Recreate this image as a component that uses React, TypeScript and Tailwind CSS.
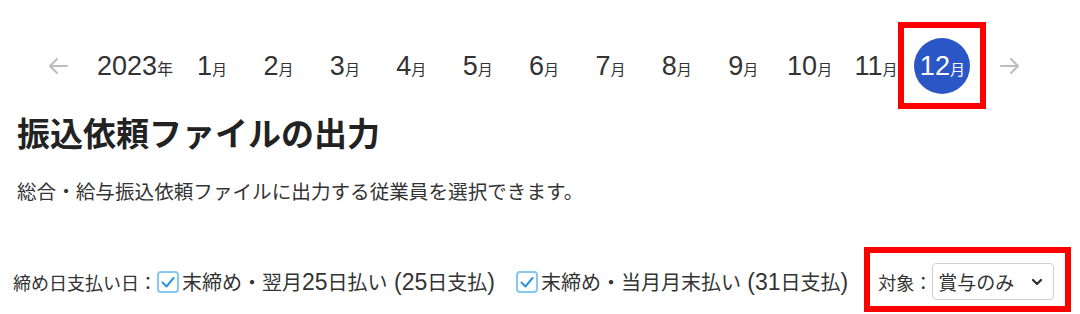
import { ChevronDown } from "lucide-react";

const months = [1, 2, 3, 4, 5, 6, 7, 8, 9, 10, 11, 12];
const selected = 12;

const jp = "font-['Noto_Sans_CJK_JP',sans-serif]";
const latin = "font-['Liberation_Sans','Noto_Sans_CJK_JP',sans-serif]";

const Arrow = ({ dir }: { dir: "left" | "right" }) => (
  <svg width="20" height="16" viewBox="0 0 20 16" className={dir === "right" ? "rotate-180" : ""}>
    <path d="M19 8H2M9 1L2 8l7 7" fill="none" stroke="#bdbdbd" strokeWidth="2" strokeLinecap="round" strokeLinejoin="round" />
  </svg>
);

const Num = ({ children }: { children: React.ReactNode }) => (
  <span className={`${latin} text-[23px]`}>{children}</span>
);

const Check = () => (
  <svg width="22" height="22" viewBox="0 0 22 22" className="shrink-0">
    <rect x="1" y="1" width="20" height="20" rx="3" fill="#fff" stroke="#86c8ee" strokeWidth="2" />
    <polyline points="5.5,11.5 9.5,15.5 16.5,7" fill="none" stroke="#2f93db" strokeWidth="2" strokeLinecap="round" strokeLinejoin="round" />
  </svg>
);

const MonthNav = () => (
  <div className="flex items-center pl-[48px] pt-[38px] text-[#333]">
    <Arrow dir="left" />
    <div className="ml-[29px] flex items-baseline">
      <span className={`${latin} text-[27px] leading-none`}>2023</span>
      <span className={`${jp} text-[16px] leading-none`}>年</span>
    </div>
    <div className="ml-[11px] flex gap-[10.4px]">
      {months.map((m) => {
        const active = m === selected;
        return (
          <div
            key={m}
            className={`relative flex h-[56px] w-[56px] items-center justify-center rounded-full ${
              active ? "bg-[#2b56c6] text-white" : ""
            }`}
          >
            <span className="flex items-baseline">
              <span className={`${latin} text-[27px] leading-none`}>{m}</span>
              <span className={`${jp} text-[15px] leading-none`}>月</span>
            </span>
            {active && (
              <div className="absolute -left-[16px] -top-[16px] h-[87px] w-[88px] border-[6px] border-[#ff0000]" />
            )}
          </div>
        );
      })}
    </div>
    <div className="ml-[30px]">
      <Arrow dir="right" />
    </div>
  </div>
);

export default function App() {
  return (
    <div className={`h-[314px] w-[1080px] overflow-hidden bg-white ${jp} text-[#333]`}>
      <MonthNav />

      <h1 className="mt-[18px] pl-[17px] text-[33px] font-bold leading-[40px] text-[#222]">
        振込依頼ファイルの出力
      </h1>

      <p className="mt-[25px] pl-[17px] text-[19.6px] leading-[28px]">
        総合・給与振込依頼ファイルに出力する従業員を選択できます。
      </p>

      <div className="mt-[58px] flex items-center pl-[13px] text-[20px] leading-[26px]">
        <span className="text-[18px]">締め日支払い日：</span>
        <label className="flex items-center">
          <Check />
          <span className="ml-[3px]">
            末締め・翌月<Num>25</Num>日払い<Num> (25</Num>日支払<Num>)</Num>
          </span>
        </label>
        <label className="ml-[21px] flex items-center">
          <Check />
          <span className="ml-[3px]">
            末締め・当月月末払い<Num> (31</Num>日支払<Num>)</Num>
          </span>
        </label>
        <div className="relative ml-[30px] flex items-center">
          <span className="text-[18px]">対象：</span>
          <div className="flex h-[37px] w-[122px] items-center justify-between rounded-[4px] border border-[#cfcfcf] bg-white pl-[5px] pr-[8px] text-[19px]">
            <span>賞与のみ</span>
            <ChevronDown size={16} strokeWidth={3.5} className="text-[#333]" />
          </div>
          <div className="absolute -bottom-[12px] -left-[14px] -right-[17px] -top-[16px] border-[6px] border-[#ff0000]" />
        </div>
      </div>
    </div>
  );
}
